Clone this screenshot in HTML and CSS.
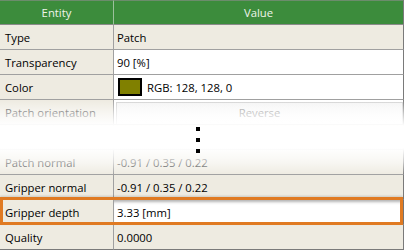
FILE: index.html
```html
<!DOCTYPE html>
<html>
<head>
<meta charset="utf-8">
<link rel="stylesheet" href="styles.css">
</head>
<body>
<div class="grid">
  <div class="hcell">Entity</div>
  <div class="hcell hlast">Value</div>

  <div class="ecell">Type</div>
  <div class="vcell ro">Patch</div>

  <div class="ecell">Transparency</div>
  <div class="vcell">90 [%]</div>

  <div class="ecell">Color</div>
  <div class="vcell"><span class="swatch"></span>RGB: 128, 128, 0</div>

  <div class="ecell dim">Patch orientation</div>
  <div class="vcell btncell"><div class="btn">Reverse</div></div>

  <div class="ecell">&nbsp;</div>
  <div class="vcell ro">&nbsp;</div>

  <div class="ecell dim">Patch normal</div>
  <div class="vcell ro dim">-0.91 / 0.35 / 0.22</div>

  <div class="ecell">Gripper normal</div>
  <div class="vcell ro">-0.91 / 0.35 / 0.22</div>

  <div class="ecell sel">Gripper depth</div>
  <div class="vcell sel selv">3.33 [mm]</div>

  <div class="ecell last">Quality</div>
  <div class="vcell ro last">0.0000</div>

  <div class="fade">
    <span class="dot"></span>
    <span class="dot"></span>
    <span class="dot"></span>
  </div>
  <div class="highlight"></div>
</div>
</body>
</html>
```
FILE: styles.css
```css
html, body {
  margin: 0;
  padding: 0;
  background: #ffffff;
}
body {
  font-family: "Open Sans", "Noto Sans", sans-serif;
  font-size: 11.3px;
  color: #000;
}
.grid {
  position: relative;
  display: grid;
  grid-template-columns: 114px 290px;
  grid-auto-rows: 25px;
  width: 404px;
  height: 250px;
}
.hcell {
  background: #3c8c3c;
  color: #eef4ea;
  display: flex;
  align-items: center;
  justify-content: center;
  box-sizing: border-box;
  border-bottom: 1px solid #8a8a8a;
  border-right: 1px solid #9cc09c;
  border-top: 1px solid #6c8c6c;
}
.hlast {
  border-right: 1px solid #7a7a7a;
}
.ecell, .vcell {
  box-sizing: border-box;
  display: flex;
  align-items: center;
  border-bottom: 1px solid #a0a0a0;
  white-space: nowrap;
  overflow: hidden;
}
.ecell {
  background: #eeebe1;
  padding-left: 5px;
  border-right: 1px solid #a0a0a0;
}
.vcell {
  background: #ffffff;
  padding-left: 3px;
  border-right: 1px solid #7a7a7a;
}
.vcell.ro {
  background: #eeebe1;
}
.last {
  border-bottom: 1px solid #7a7a7a;
}
.swatch {
  display: inline-block;
  width: 20px;
  height: 14px;
  border: 2px solid #000;
  background: #808000;
  margin-right: 5px;
  margin-left: 1px;
}
.btncell {
  padding: 2px 0 0 2px;
  align-items: stretch;
}
.btn {
  flex: 1;
  border: 1px solid #d4d4d4;
  border-bottom: none;
  background: linear-gradient(#f4f4f4, #ffffff);
  color: #8a8a8a;
  text-align: center;
  padding-top: 2px;
}
.dim {
  color: #333;
}
.selv {
  box-shadow: inset 0 4px 3px -2px rgba(0,0,0,0.3);
}
.fade {
  position: absolute;
  left: 0;
  top: 100px;
  width: 404px;
  height: 75px;
  background: linear-gradient(rgba(255,255,255,0) 0px, rgba(255,255,255,0.6) 14px, #ffffff 26px, #ffffff 48px, rgba(255,255,255,0.6) 62px, rgba(255,255,255,0) 75px);
}
.dot {
  position: absolute;
  left: 196px;
  width: 4px;
  height: 4px;
  background: #000;
}
.dot:nth-child(1) { top: 27px; }
.dot:nth-child(2) { top: 38px; }
.dot:nth-child(3) { top: 49px; }
.highlight {
  position: absolute;
  left: 0;
  top: 197px;
  width: 403px;
  height: 28px;
  box-sizing: border-box;
  border: 3px solid #e07a22;
  box-shadow: 0 -1px 2px rgba(0,0,0,0.15);
}
```
